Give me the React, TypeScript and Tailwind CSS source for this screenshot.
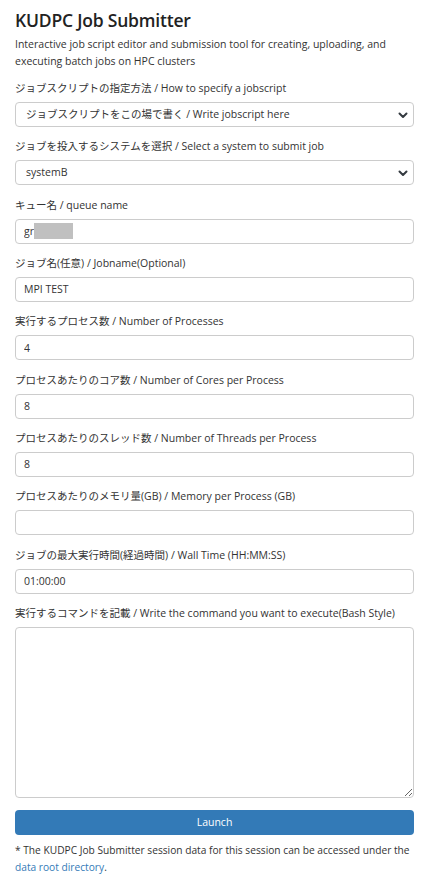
import React from "react";

const font = { fontFamily: '"Open Sans", "Noto Sans CJK JP", sans-serif' };

function Chevron() {
  return (
    <svg
      className="pointer-events-none absolute right-[5px] top-1/2 -translate-y-1/2"
      width="12"
      height="12"
      viewBox="0 0 12 12"
      fill="none"
    >
      <path d="M2.5 4.5 L6 8 L9.5 4.5" stroke="#343a40" strokeWidth="2" strokeLinecap="round" strokeLinejoin="round" />
    </svg>
  );
}

function Field({ label, children }: { label: string; children: React.ReactNode }) {
  return (
    <div className="mb-[10.33px]">
      <label className="block text-[10.5px] leading-[18px] text-[#333] mb-[5px]">{label}</label>
      {children}
    </div>
  );
}

const inputCls =
  "block w-full h-[25px] rounded-[4px] border border-[#ccc] bg-white px-[8px] text-[10.5px] text-[#333] outline-none";

function SelectBox({ value, options }: { value: string; options: string[] }) {
  return (
    <div className="relative">
      <select
        defaultValue={value}
        className="block w-full h-[25px] appearance-none rounded-[4px] border border-[#ccc] bg-white pl-[10px] pr-[24px] text-[10.5px] text-[#333] outline-none"
        style={font}
      >
        {options.map((o) => (
          <option key={o}>{o}</option>
        ))}
      </select>
      <Chevron />
    </div>
  );
}

export default function App() {
  const fields: [string, string][] = [
    ["ジョブ名(任意) / Jobname(Optional)", "MPI TEST"],
    ["実行するプロセス数 / Number of Processes", "4"],
    ["プロセスあたりのコア数 / Number of Cores per Process", "8"],
    ["プロセスあたりのスレッド数 / Number of Threads per Process", "8"],
    ["プロセスあたりのメモリ量(GB) / Memory per Process (GB)", ""],
    ["ジョブの最大実行時間(経過時間) / Wall Time (HH:MM:SS)", "01:00:00"],
  ];

  return (
    <div className="min-h-[887px] bg-white pl-[15px] pr-[17px] text-[#333]" style={font}>
      <h1 className="pt-[6px] text-[17.5px] leading-[28px] font-semibold tracking-[-0.2px] text-[#222]">
        KUDPC Job Submitter
      </h1>
      <p className="mt-[2px] mb-[9px] text-[10.5px] leading-[17px]">
        Interactive job script editor and submission tool for creating, uploading, and executing batch jobs on HPC
        clusters
      </p>

      <Field label="ジョブスクリプトの指定方法 / How to specify a jobscript">
        <SelectBox
          value="ジョブスクリプトをこの場で書く / Write jobscript here"
          options={["ジョブスクリプトをこの場で書く / Write jobscript here", "ファイルをアップロード / Upload a file"]}
        />
      </Field>

      <Field label="ジョブを投入するシステムを選択 / Select a system to submit job">
        <SelectBox value="systemB" options={["systemA", "systemB", "systemC", "systemG"]} />
      </Field>

      <Field label="キュー名 / queue name">
        <div className="relative">
          <input className={inputCls} style={font} defaultValue="gr" />
          <span className="absolute left-[19px] top-[4px] h-[16px] w-[39px] bg-[#c0c0c0]" />
        </div>
      </Field>

      {fields.map(([label, value]) => (
        <Field key={label} label={label}>
          <input className={inputCls} style={font} defaultValue={value} />
        </Field>
      ))}

      <div>
        <label className="block text-[10.5px] leading-[18px] text-[#333] mb-[5px]">
          実行するコマンドを記載 / Write the command you want to execute(Bash Style)
        </label>
        <textarea
          className="block w-full h-[171px] rounded-[4px] border border-[#ccc] bg-white px-[8px] py-[4px] text-[10.5px] outline-none"
          style={font}
        />
      </div>

      <button
        className="mt-[12px] block w-full h-[25px] rounded-[4px] bg-[#337ab7] text-[10.5px] text-white"
        style={font}
      >
        Launch
      </button>

      <p className="mt-[7px] text-[10.2px] leading-[17px]">
        * The KUDPC Job Submitter session data for this session can be accessed under the{" "}
        <a href="#" className="text-[#337ab7]">
          data root directory
        </a>
        .
      </p>
    </div>
  );
}
